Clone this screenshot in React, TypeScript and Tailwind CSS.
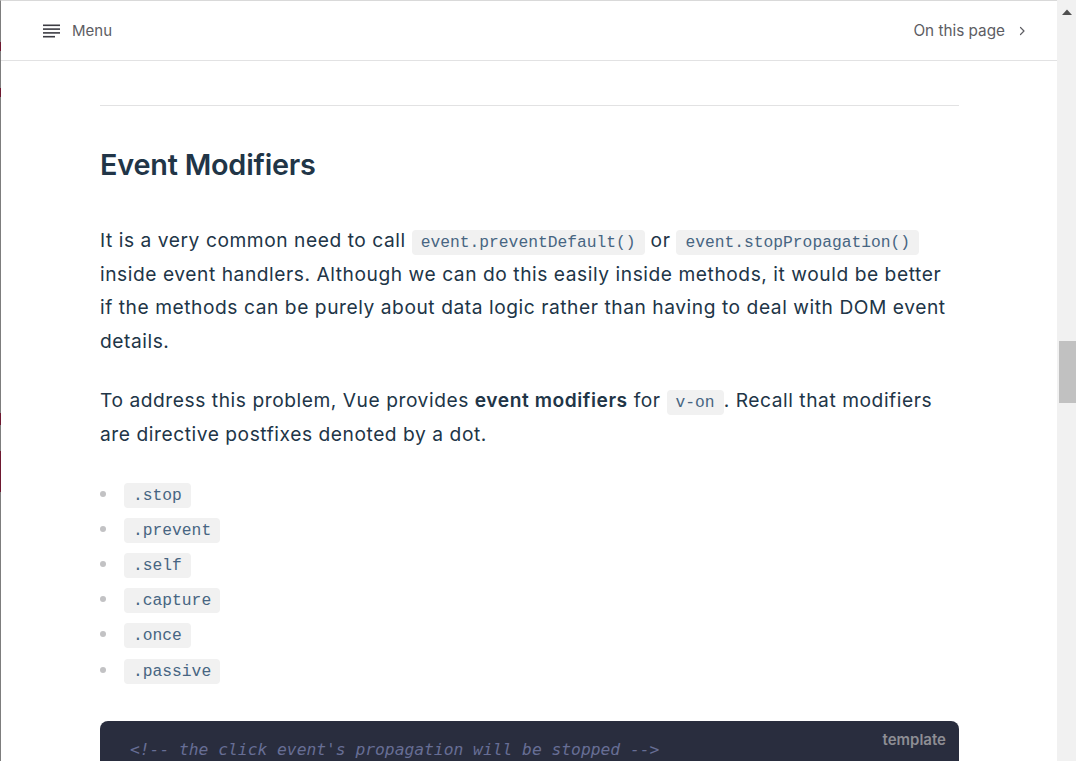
import React from 'react';

const modifiers = ['.stop', '.prevent', '.self', '.capture', '.once', '.passive'];

function Code({ children }: { children: React.ReactNode }) {
  return (
    <code className="rounded-[4px] bg-[#f1f1f1] px-[9px] py-[3px] font-['Liberation_Mono',monospace] text-[16.3px] leading-none tracking-normal text-[#476582]">
      {children}
    </code>
  );
}

function MenuIcon() {
  return (
    <svg width="17" height="14" viewBox="0 0 17 14" fill="none">
      <rect x="0" y="0.5" width="17" height="1.6" fill="#3c3c43" />
      <rect x="0" y="4.3" width="17" height="1.6" fill="#3c3c43" />
      <rect x="0" y="8.1" width="17" height="1.6" fill="#3c3c43" />
      <rect x="0" y="11.9" width="12" height="1.6" fill="#3c3c43" />
    </svg>
  );
}

export default function App() {
  return (
    <div className="relative flex h-[761px] w-[1076px] overflow-hidden bg-white font-['Inter',sans-serif]">
      {/* page */}
      <div className="relative flex w-[1057px] flex-col border-l border-t border-l-[#7d7d7d] border-t-[#d9d9d9]">
        {/* window edge marks */}
        <div className="absolute left-[-1px] top-[41px] h-[9px] w-[1px] bg-[#6e1830]" />
        <div className="absolute left-[-1px] top-[87px] h-[9px] w-[1px] bg-[#6e1830]" />
        <div className="absolute left-[-1px] top-[412px] h-[12px] w-[1px] bg-[#6e1830]" />
        <div className="absolute left-[-1px] top-[450px] h-[41px] w-[1px] bg-[#6e1830]" />

        {/* header */}
        <header className="flex h-[60px] shrink-0 items-center justify-between border-b border-[#e2e2e3] pl-[42px] pr-[29px]">
          <div className="flex items-center gap-[12px] pt-[1px] text-[15px]">
            <MenuIcon />
            <span className="text-[#5d5d63]">Menu</span>
          </div>
          <div className="flex items-center gap-[11px] pt-[1px] text-[15.3px] text-[#5d5d63]">
            <span>On this page</span>
            <svg width="12" height="12" viewBox="0 0 24 24" fill="none" stroke="#5d5d63" strokeWidth="2.4" strokeLinecap="round" strokeLinejoin="round">
              <path d="M9 5l7 7-7 7" />
            </svg>
          </div>
        </header>

        {/* content */}
        <main className="pl-[99px] pr-[98px] text-[#213547]">
          <div className="mt-[44px] border-t border-[#e2e2e3] pt-[40px]">
            <h2 className="text-[28.8px] font-semibold leading-[38px] tracking-[-0.2px]">Event Modifiers</h2>
          </div>

          <p className="mt-[40px] text-[19.2px] leading-[33.6px] tracking-[0.55px]">
            It is a very common need to call <Code>event.preventDefault()</Code> or{' '}
            <Code>event.stopPropagation()</Code> inside event handlers. Although we can do this easily inside methods,
            it would be better if the methods can be purely about data logic rather than having to deal with DOM event
            details.
          </p>

          <p className="mt-[26px] text-[19.2px] leading-[33.6px] tracking-[0.55px]">
            To address this problem, Vue provides <strong className="font-semibold">event modifiers</strong> for{' '}
            <Code>v-on</Code>. Recall that modifiers are directive postfixes denoted by a dot.
          </p>

          <ul className="mt-[25px] pl-[24px]">
            {modifiers.map((m, i) => (
              <li
                key={m}
                className={`relative text-[19.2px] leading-[33.6px] before:absolute before:left-[-24px] before:top-[14px] before:h-[6px] before:w-[6px] before:rounded-full before:bg-[#c2c2c4] before:content-[''] ${i > 0 ? 'mt-[1.6px]' : ''}`}
              >
                <Code>{m}</Code>
              </li>
            ))}
          </ul>

          <div className="relative mt-[35px] rounded-[8px] bg-[#292d3e] px-[30px] pb-[20px] pt-[15px]">
            <span className="absolute right-[13px] top-[8px] text-[15px] font-semibold text-[#8e8e94]">template</span>
            <pre className="font-['DejaVu_Sans_Mono',monospace] text-[16.3px] italic leading-[28px] text-[#676e95]">
              {"<!-- the click event's propagation will be stopped -->"}
            </pre>
          </div>
        </main>
      </div>

      {/* scrollbar */}
      <div className="relative w-[19px] shrink-0 bg-[#f1f1f1]">
        <svg className="absolute left-[5px] top-[9px]" width="10" height="6" viewBox="0 0 10 6">
          <path d="M0 6 L5 0.5 L10 6 Z" fill="#505050" />
        </svg>
        <div className="absolute left-[2px] top-[341px] h-[62px] w-[17px] bg-[#c1c1c1]" />
      </div>
    </div>
  );
}
